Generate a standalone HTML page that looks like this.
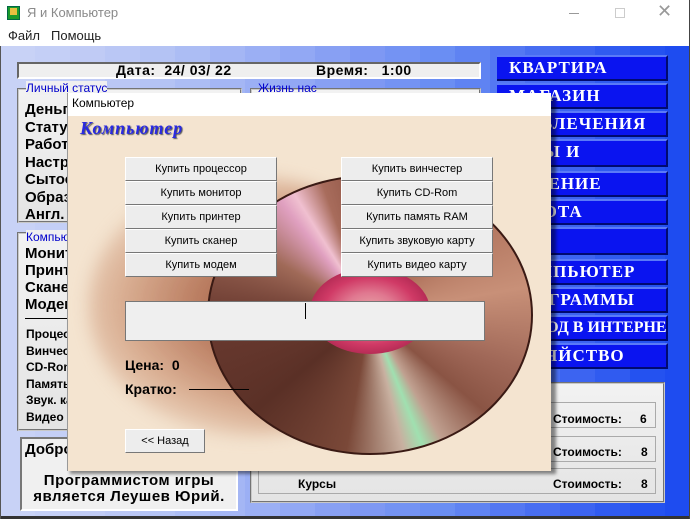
<!DOCTYPE html>
<html><head><meta charset="utf-8"><style>
*{margin:0;padding:0;box-sizing:border-box}
body{width:690px;height:519px;overflow:hidden;position:relative;background:#fff;font-family:"Liberation Sans",sans-serif}
.a{position:absolute}
.t{position:absolute;white-space:nowrap}
.bg{position:absolute;top:46px;height:470px;width:36px}
.panel{background:linear-gradient(180deg,#f2f2f2,#e4e4e4);border:2px groove #c8c8c8}
.lb{font-weight:bold;font-size:15px;color:#000;font-family:"Liberation Sans",sans-serif}
.sb{font-weight:bold;font-size:12px;color:#000;font-family:"Liberation Sans",sans-serif}
.rb{position:absolute;left:497px;width:171px;height:26px;background:#0a14f0;border-top:2px solid #5a7af8;border-right:2px solid #000a70;border-bottom:2px solid #000a70;color:#fff;font-family:"Liberation Serif",serif;font-weight:bold;font-size:17px;letter-spacing:1px;padding-left:12px;line-height:22px;white-space:nowrap;overflow:hidden}
.btn{position:absolute;width:152px;height:24px;background:#ededed;border:1px solid #fff;border-right-color:#777;border-bottom-color:#777;font-size:11px;text-align:center;line-height:22px;color:#000}
</style></head><body>
<div class="a" style="left:7px;top:6px;width:13px;height:14px;background:#1a9a2a;border:1px solid #064"></div>
<div class="a" style="left:10px;top:8px;width:7px;height:7px;background:#e6c040"></div>
<div class="t" style="left:27px;top:5px;font-size:13px;color:#8a8a8a">Я и Компьютер</div>
<div class="a" style="left:569px;top:13px;width:10px;height:1px;background:#999"></div>
<div class="a" style="left:615px;top:8px;width:10px;height:10px;border:1px solid #ccc"></div>
<div class="t" style="left:657px;top:1px;font-size:18px;color:#999">✕</div>
<div class="t" style="left:8px;top:28px;font-size:13px;color:#222">Файл</div>
<div class="t" style="left:51px;top:28px;font-size:13px;color:#222">Помощь</div>

<div class="bg" style="left:0;background:#c8d2f6"></div>
<div class="bg" style="left:35px;background:#c4cff6"></div>
<div class="bg" style="left:70px;background:#c0cbf5"></div>
<div class="bg" style="left:105px;background:#bac7f5"></div>
<div class="bg" style="left:140px;background:#b4c3f4"></div>
<div class="bg" style="left:175px;background:#acbdf4"></div>
<div class="bg" style="left:210px;background:#a4b6f4"></div>
<div class="bg" style="left:245px;background:#9bafF4"></div>
<div class="bg" style="left:280px;background:#92a8f4"></div>
<div class="bg" style="left:315px;background:#88a0f3"></div>
<div class="bg" style="left:350px;background:#7e98f3"></div>
<div class="bg" style="left:385px;background:#7493f3"></div>
<div class="bg" style="left:420px;background:#6a8ef3"></div>
<div class="bg" style="left:455px;background:#5f83f2"></div>
<div class="bg" style="left:490px;background:#5478f2"></div>
<div class="bg" style="left:525px;background:#486ef1"></div>
<div class="bg" style="left:560px;background:#3c64f1"></div>
<div class="bg" style="left:595px;background:#305bf0"></div>
<div class="bg" style="left:630px;background:#2452f0"></div>
<div class="bg" style="left:665px;width:25px;background:#1e4cf0"></div>
<div class="a" style="left:0;top:516px;width:690px;height:3px;background:#333"></div>
<div class="a" style="left:0;top:46px;width:1px;height:473px;background:#555"></div>
<div class="a" style="left:689px;top:0;width:1px;height:519px;background:#444"></div>
<div class="a" style="left:17px;top:62px;width:464px;height:17px;background:#efefef;border:2px solid;border-color:#666 #fff #fff #666"></div>
<div class="t lb" style="left:116px;top:62px;font-size:14px;letter-spacing:.5px">Дата:&nbsp; 24/ 03/ 22</div>
<div class="t lb" style="left:316px;top:62px;font-size:14px;letter-spacing:.5px">Время:&nbsp;&nbsp; 1:00</div>
<div class="a panel" style="left:17px;top:88px;width:225px;height:135px"></div>
<div class="t" style="left:26px;top:81px;font-size:12px;color:#00c;background:#f0f0f0">Личный статус</div>
<div class="t lb" style="left:25px;top:101px;line-height:17.5px">Деньги<br>Статус<br>Работа<br>Настроение<br>Сытость<br>Образование<br>Англ. язык</div>
<div class="a panel" style="left:17px;top:232px;width:225px;height:199px"></div>
<div class="t" style="left:26px;top:230px;font-size:12px;color:#00c;background:#f0f0f0">Компьютер</div>
<div class="t lb" style="left:25px;top:245px;line-height:17px">Монитор<br>Принтер<br>Сканер<br>Модем</div>
<div class="a" style="left:25px;top:318px;width:200px;height:1px;background:#000"></div>
<div class="t sb" style="left:26px;top:326px;line-height:16.5px">Процессор<br>Винчестер<br>CD-Rom<br>Память<br>Звук. карта<br>Видео карта</div>
<div class="a" style="left:20px;top:437px;width:218px;height:74px;background:#f0f0f0;border:2px solid;border-color:#777 #fff #fff #777"></div>
<div class="t lb" style="left:25px;top:441px">Добро пожаловать!</div>
<div class="t lb" style="left:20px;top:473px;width:218px;text-align:center;line-height:16px;letter-spacing:.5px">Программистом игры<br>является Леушев Юрий.</div>
<div class="a panel" style="left:250px;top:88px;width:231px;height:290px"></div>
<div class="t" style="left:258px;top:81px;font-size:12px;color:#00c">Жизнь нас</div>
<div class="a panel" style="left:250px;top:382px;width:415px;height:121px"></div>
<div class="a" style="left:258px;top:402px;width:398px;height:26px;border:1px solid #aaa"></div>
<div class="a" style="left:258px;top:436px;width:398px;height:26px;border:1px solid #aaa"></div>
<div class="a" style="left:258px;top:468px;width:398px;height:26px;border:1px solid #aaa"></div>
<div class="t sb" style="left:553px;top:412px">Стоимость:</div><div class="t sb" style="left:640px;top:412px">6</div>
<div class="t sb" style="left:553px;top:445px">Стоимость:</div><div class="t sb" style="left:641px;top:445px">8</div>
<div class="t sb" style="left:553px;top:477px">Стоимость:</div><div class="t sb" style="left:641px;top:477px">8</div>
<div class="t sb" style="left:298px;top:477px">Курсы</div>
<div class="rb" style="top:55px">КВАРТИРА</div>
<div class="rb" style="top:83px">МАГАЗИН</div>
<div class="rb" style="top:111px">РАЗВЛЕЧЕНИЯ</div>
<div class="rb" style="top:139px;height:28px">ВУЗЫ И</div>
<div class="rb" style="top:171px">ЛЕЧЕНИЕ</div>
<div class="rb" style="top:199px">РАБОТА</div>
<div class="rb" style="top:227px;height:28px">ЕДА</div>
<div class="rb" style="top:259px">КОМПЬЮТЕР</div>
<div class="rb" style="top:287px">ПРОГРАММЫ</div>
<div class="rb" style="top:315px;font-size:16px;letter-spacing:0">ВЫХОД В ИНТЕРНЕТ</div>
<div class="rb" style="top:343px">ХОЗЯЙСТВО</div>

<div class="a" style="left:70px;top:97px;width:486px;height:377px;background:rgba(0,0,0,.45);filter:blur(1.5px)"></div>
<div class="a" style="left:67px;top:93px;width:484px;height:378px;background:#fff;overflow:hidden;border-left:1px solid #999">
  <div class="t" style="left:4px;top:3px;font-size:12px;color:#000">Компьютер</div>
  <div class="a" style="left:0;top:23px;width:484px;height:355px;background:#f4e4d0;overflow:hidden">
    <div class="a" style="left:20px;top:60px;width:320px;height:260px;border-radius:50%;background:radial-gradient(ellipse at 70% 50%,#9a5a44 0%,#b87a5e 35%,rgba(210,160,130,.8) 60%,rgba(244,228,208,0) 85%);filter:blur(8px)"></div>
    <div class="a" style="left:139px;top:59px;width:326px;height:280px;border-radius:50%;background:conic-gradient(from 0deg at 50% 50%,#8a5040 0deg,#a86a54 40deg,#c89078 80deg,#a06858 110deg,#8a5444 130deg,#c0a090 150deg,#a0e0b0 158deg,#c8b0a0 166deg,#7a4838 190deg,#5a3026 230deg,#6a3a30 270deg,#a06a58 300deg,#e0a0c0 322deg,#f0c0d0 328deg,#a86c5c 340deg,#8a5040 360deg);border:2px solid #3a1a14"></div>
    <div class="a" style="left:242px;top:152px;width:120px;height:86px;border-radius:50%;background:radial-gradient(ellipse,#e8a8a8 0%,#e07890 30%,#d03a66 55%,#a02048 85%,#5a1020 100%)"></div>
  </div>
  <div class="t" style="left:12px;top:25px;font-family:'Liberation Serif',serif;font-weight:bold;font-style:italic;font-size:18px;color:#2a2ae0;text-shadow:1px 1px 1px #555;letter-spacing:1px">Компьютер</div>
  <div class="btn" style="left:57px;top:64px">Купить процессор</div>
  <div class="btn" style="left:57px;top:88px">Купить монитор</div>
  <div class="btn" style="left:57px;top:112px">Купить принтер</div>
  <div class="btn" style="left:57px;top:136px">Купить сканер</div>
  <div class="btn" style="left:57px;top:160px">Купить модем</div>
  <div class="btn" style="left:273px;top:64px">Купить винчестер</div>
  <div class="btn" style="left:273px;top:88px">Купить CD-Rom</div>
  <div class="btn" style="left:273px;top:112px">Купить память RAM</div>
  <div class="btn" style="left:273px;top:136px">Купить звуковую карту</div>
  <div class="btn" style="left:273px;top:160px">Купить видео карту</div>
  <div class="a" style="left:57px;top:208px;width:360px;height:40px;background:#efefef;border:1px solid #777"></div>
  <div class="a" style="left:237px;top:210px;width:1px;height:16px;background:#000"></div>
  <div class="t lb" style="left:57px;top:264px;font-size:14px">Цена:&nbsp; 0</div>
  <div class="t lb" style="left:57px;top:288px;font-size:14px">Кратко:</div>
  <div class="a" style="left:121px;top:296px;width:60px;height:1px;background:#000"></div>
  <div class="btn" style="left:57px;top:336px;width:80px">&lt;&lt; Назад</div>
</div>
</body></html>
